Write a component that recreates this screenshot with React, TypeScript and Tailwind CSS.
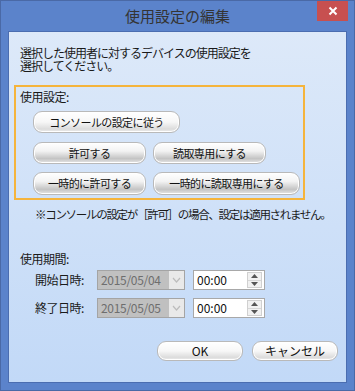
import React from 'react';

const jp = "font-['Noto_Sans_CJK_JP','Noto_Sans',sans-serif]";

// glossy Win-style button
function GlossButton({
  label,
  w,
  h = 22,
  dark = false,
  small = true,
}: {
  label: string;
  w: number;
  h?: number;
  dark?: boolean;
  small?: boolean;
}) {
  return (
    <button
      className={`flex items-center justify-center rounded-[9px] border border-[#b9b9b9] shadow-[inset_0_0_0_1px_#ffffff] leading-none text-[#111] whitespace-nowrap ${
        small ? 'text-[11px] tracking-[-0.6px]' : 'text-[12px]'
      } ${
        dark
          ? 'bg-[linear-gradient(to_bottom,#ffffff_0%,#f3f3f3_40%,#c4c4c4_78%,#e6e6e6_100%)]'
          : 'bg-[linear-gradient(to_bottom,#ffffff_0%,#f7f7f7_50%,#dcdcdc_85%,#ececec_100%)]'
      }`}
      style={{ width: w, height: h }}
    >
      {label}
    </button>
  );
}

function DateRow({ label, date, mt }: { label: string; date: string; mt: string }) {
  return (
    <div className={`flex items-center h-[20px] ${mt}`}>
      <span className="ml-[26px] w-[62px] text-[12px] leading-[14px] tracking-[-0.5px] text-[#1a1a1a]">{label}</span>
      {/* disabled date picker */}
      <div className="flex h-[20px] w-[88px] border border-[#a4a4a4] bg-[#c0c0c0]">
        <span className="flex-1 pl-[3px] text-[12px] leading-[18px] tracking-[-0.3px] text-[#6e6e6e]">{date}</span>
        <div className="flex w-[15px] items-center justify-center bg-[#e9e9e9]">
          <svg width="9" height="6" viewBox="0 0 9 6">
            <path d="M1 1 L4.5 5 L8 1" fill="none" stroke="#bcbcbc" strokeWidth="1.2" />
          </svg>
        </div>
      </div>
      {/* time spinner */}
      <div className="ml-[8px] flex h-[20px] w-[72px] items-center border border-[#a8a8a8] bg-white">
        <span className="flex-1 pl-[3px] text-[12px] leading-[18px] text-[#111]">00:00</span>
        <div className="mr-[2px] flex h-[16px] w-[15px] flex-col border border-[#d0d0d0] bg-[#f1f1f1]">
          <div className="flex flex-1 items-center justify-center border-b border-[#d6d6d6]">
            <svg width="7" height="4" viewBox="0 0 7 4">
              <path d="M0 4 L3.5 0 L7 4 Z" fill="#555" />
            </svg>
          </div>
          <div className="flex flex-1 items-center justify-center">
            <svg width="7" height="4" viewBox="0 0 7 4">
              <path d="M0 0 L3.5 4 L7 0 Z" fill="#555" />
            </svg>
          </div>
        </div>
      </div>
    </div>
  );
}

export default function App() {
  return (
    <div className={`w-[355px] h-[391px] flex flex-col border border-[#4a69a6] bg-[#5b83cb] ${jp}`}>
      {/* Title bar */}
      <div className="relative flex h-[30px] shrink-0 items-center justify-center">
        <span className="text-[15px] leading-none text-[#343434] pb-[1px]">使用設定の編集</span>
        <div className="absolute right-[6px] top-0 flex h-[20px] w-[31px] items-center justify-center bg-[#c75050]">
          <svg width="10" height="10" viewBox="0 0 10 10">
            <path d="M1.5 1.5 L8.5 8.5 M8.5 1.5 L1.5 8.5" stroke="#fff" strokeWidth="2" />
          </svg>
        </div>
      </div>

      {/* Client area */}
      <div className="mx-[7px] mb-[7px] flex-1 border border-[#4b6db0] bg-gradient-to-b from-[#dde9f9] to-[#c2d9f7] text-[#1a1a1a]">
        <div className="ml-[11px] mt-[14px] flex flex-col text-[12px] tracking-[-1px] whitespace-nowrap">
          <div className="h-[13px] leading-[13px]">選択した使用者に対するデバイスの使用設定を</div>
          <div className="h-[13px] leading-[13px]">選択してください。</div>
        </div>

        {/* Usage setting group */}
        <div className="ml-[5px] mt-[13px] w-[291px] border-2 border-[#f5b43c] pb-[3px]">
          <div className="pl-[4px] pt-[3px] text-[12px] leading-[14px] tracking-[-0.5px]">使用設定:</div>
          <div className="mt-[7px] flex flex-col pl-[17px]">
            <GlossButton label="コンソールの設定に従う" w={147} />
            <div className="mt-[9px] flex gap-[7px]">
              <GlossButton label="許可する" w={113} dark />
              <GlossButton label="読取専用にする" w={113} dark />
            </div>
            <div className="mt-[8px] flex gap-[7px]">
              <GlossButton label="一時的に許可する" w={113} h={23} dark />
              <GlossButton label="一時的に読取専用にする" w={147} h={23} dark />
            </div>
          </div>
        </div>

        <p className="ml-[26px] mt-[7px] text-[11.5px] leading-[14px] tracking-[-1.3px] whitespace-nowrap">
          ※コンソールの設定が［許可］の場合、設定は適用されません。
        </p>

        <div className="ml-[11px] mt-[31px] text-[12px] leading-[14px] tracking-[-0.5px]">使用期間:</div>
        <DateRow label="開始日時:" date="2015/05/04" mt="mt-[4px]" />
        <DateRow label="終了日時:" date="2015/05/05" mt="mt-[8px]" />

        <div className="mt-[23px] flex justify-end gap-[9px] pr-[8px]">
          <GlossButton label="OK" w={86} h={20} small={false} />
          <GlossButton label="キャンセル" w={86} h={20} small={false} />
        </div>
      </div>
    </div>
  );
}
